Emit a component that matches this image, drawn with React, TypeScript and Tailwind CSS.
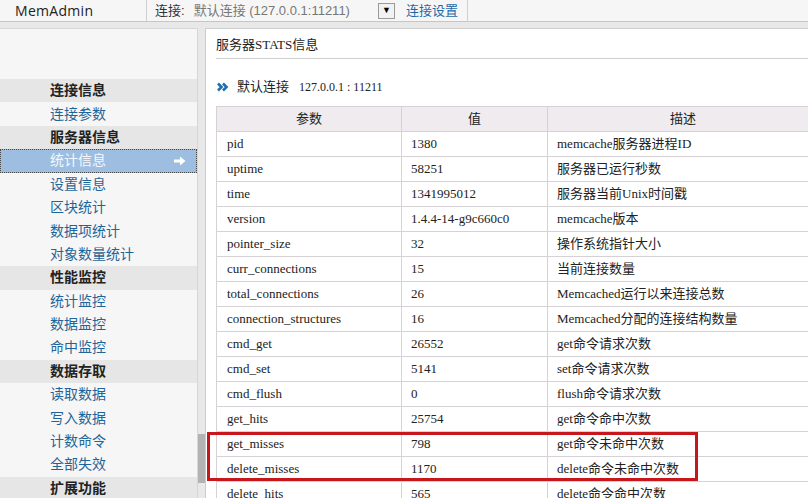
import React from 'react';

const sans = { fontFamily: '"Liberation Sans", "Noto Sans CJK SC", sans-serif' };

type NavRow = { label: string; head?: boolean; active?: boolean };

const nav: NavRow[] = [
  { label: '连接信息', head: true },
  { label: '连接参数' },
  { label: '服务器信息', head: true },
  { label: '统计信息', active: true },
  { label: '设置信息' },
  { label: '区块统计' },
  { label: '数据项统计' },
  { label: '对象数量统计' },
  { label: '性能监控', head: true },
  { label: '统计监控' },
  { label: '数据监控' },
  { label: '命中监控' },
  { label: '数据存取', head: true },
  { label: '读取数据' },
  { label: '写入数据' },
  { label: '计数命令' },
  { label: '全部失效' },
  { label: '扩展功能', head: true },
];

const stats = [
  ['pid', '1380', 'memcache服务器进程ID'],
  ['uptime', '58251', '服务器已运行秒数'],
  ['time', '1341995012', '服务器当前Unix时间戳'],
  ['version', '1.4.4-14-g9c660c0', 'memcache版本'],
  ['pointer_size', '32', '操作系统指针大小'],
  ['curr_connections', '15', '当前连接数量'],
  ['total_connections', '26', 'Memcached运行以来连接总数'],
  ['connection_structures', '16', 'Memcached分配的连接结构数量'],
  ['cmd_get', '26552', 'get命令请求次数'],
  ['cmd_set', '5141', 'set命令请求次数'],
  ['cmd_flush', '0', 'flush命令请求次数'],
  ['get_hits', '25754', 'get命令命中次数'],
  ['get_misses', '798', 'get命令未命中次数'],
  ['delete_misses', '1170', 'delete命令未命中次数'],
  ['delete_hits', '565', 'delete命令命中次数'],
];

const ArrowIcon = () => (
  <svg width="12" height="10" viewBox="0 0 12 10">
    <path d="M0 3.5h6V0.5L11.5 5 6 9.5V6.5H0z" fill="#fff" />
  </svg>
);

const DoubleChevron = () => (
  <svg width="12" height="10" viewBox="0 0 12 10">
    <path d="M1 1.5L4.5 5 1 8.5M6 1.5L9.5 5 6 8.5" stroke="#1d6fb0" strokeWidth="2.6" fill="none" />
  </svg>
);

export default function App() {
  return (
    <div className="relative w-[808px] h-[498px] overflow-hidden bg-[#e8e8e8] flex flex-col" style={sans}>
      {/* top bar */}
      <div className="h-[22px] shrink-0 flex items-center bg-[#f6f6f6] border-b border-[#c6c6c6]">
        <div className="w-[146px] pl-[15px] text-[14px] font-medium text-[#222] tracking-[0.3px]" style={{ fontFamily: '"Open Sans", sans-serif' }}>
          MemAdmin
        </div>
        <div className="h-full border-l border-[#cfcfcf] flex items-center pl-[8px] text-[13px]">
          <span className="text-[#333]">连接:</span>
          <span className="ml-[9px] text-[#777]">默认连接 (127.0.0.1:11211)</span>
          <span className="ml-[28px] w-[17px] h-[16px] border border-[#9a9a9a] bg-[#f2f2f2] flex items-center justify-center text-[9px] text-black">▼</span>
          <span className="ml-[11px] text-[#1f69a8]">连接设置</span>
          <span className="ml-[9px] h-[22px] border-l border-[#cfcfcf]"></span>
        </div>
      </div>
      <div className="h-[6px] shrink-0"></div>

      <div className="flex flex-1 min-h-0">
        {/* sidebar */}
        <div className="w-[198px] shrink-0 bg-[#f6f6f6] border-t border-r border-[#d6d6d6] flex flex-col">
          <div className="h-[50px] shrink-0"></div>
          {nav.map(n =>
            n.head ? (
              <div key={n.label} className="h-[23.4px] shrink-0 bg-[#e6e6e6] pl-[50px] flex items-center text-[14px] font-bold text-[#222]">
                {n.label}
              </div>
            ) : n.active ? (
              <div key={n.label} className="h-[23.4px] shrink-0 bg-[#9dbee0] outline-1 outline-dotted outline-[#444] -outline-offset-1 pl-[50px] pr-[11px] flex items-center justify-between text-[14px] text-[#f4f8fc]">
                {n.label}
                <ArrowIcon />
              </div>
            ) : (
              <div key={n.label} className="h-[23.4px] shrink-0 pl-[50px] flex items-center text-[14px] text-[#1f6599]">
                {n.label}
              </div>
            )
          )}
        </div>

        {/* scrollbar track */}
        <div className="w-[7px] shrink-0 flex flex-col">
          <div className="h-[406px] shrink-0"></div>
          <div className="h-[49px] shrink-0 bg-[#b3b3b3]"></div>
        </div>

        {/* content */}
        <div className="flex-1 min-w-0 bg-white border-t border-l border-[#cdcdcd] pl-[10px] overflow-hidden">
          <div className="pt-[8px] pb-[5px] border-b border-[#cfcfcf] text-[13px] leading-[16px] text-[#222]" style={{ fontFamily: '"Liberation Serif", "Noto Sans CJK SC", serif' }}>
            服务器STATS信息
          </div>
          <div className="mt-[20px] h-[16px] flex items-center text-[#222]">
            <span className="ml-[1px]"><DoubleChevron /></span>
            <span className="ml-[8px] text-[13px]">默认连接</span>
            <span className="ml-[10px] text-[12px]" style={{ fontFamily: '"Liberation Serif", serif' }}>127.0.0.1 : 11211</span>
          </div>
          <table className="mt-[11px] w-[603px] border-collapse text-[13px] text-[#222]" style={{ fontFamily: '"Liberation Serif", "Noto Sans CJK SC", serif' }}>
            <thead>
              <tr className="h-[25px] bg-[#efebef]">
                <th className="w-[185px] border border-[#d5d1d5] font-normal text-center" style={sans}>参数</th>
                <th className="w-[146px] border border-[#d5d1d5] font-normal text-center" style={sans}>值</th>
                <th className="border border-[#d5d1d5] font-normal text-center" style={sans}>描述</th>
              </tr>
            </thead>
            <tbody>
              {stats.map(r => (
                <tr key={r[0]} className="h-[25px]">
                  <td className="border border-[#d5d1d5] pl-[10px] whitespace-nowrap">{r[0]}</td>
                  <td className="border border-[#d5d1d5] pl-[9px] whitespace-nowrap">{r[1]}</td>
                  <td className="border border-[#d5d1d5] pl-[9px] whitespace-nowrap">{r[2]}</td>
                </tr>
              ))}
            </tbody>
          </table>
        </div>
      </div>

      {/* highlight box */}
      <div className="absolute left-[207px] top-[432px] w-[491px] h-[49px] border-[3px] border-[#c8161d]"></div>
    </div>
  );
}
